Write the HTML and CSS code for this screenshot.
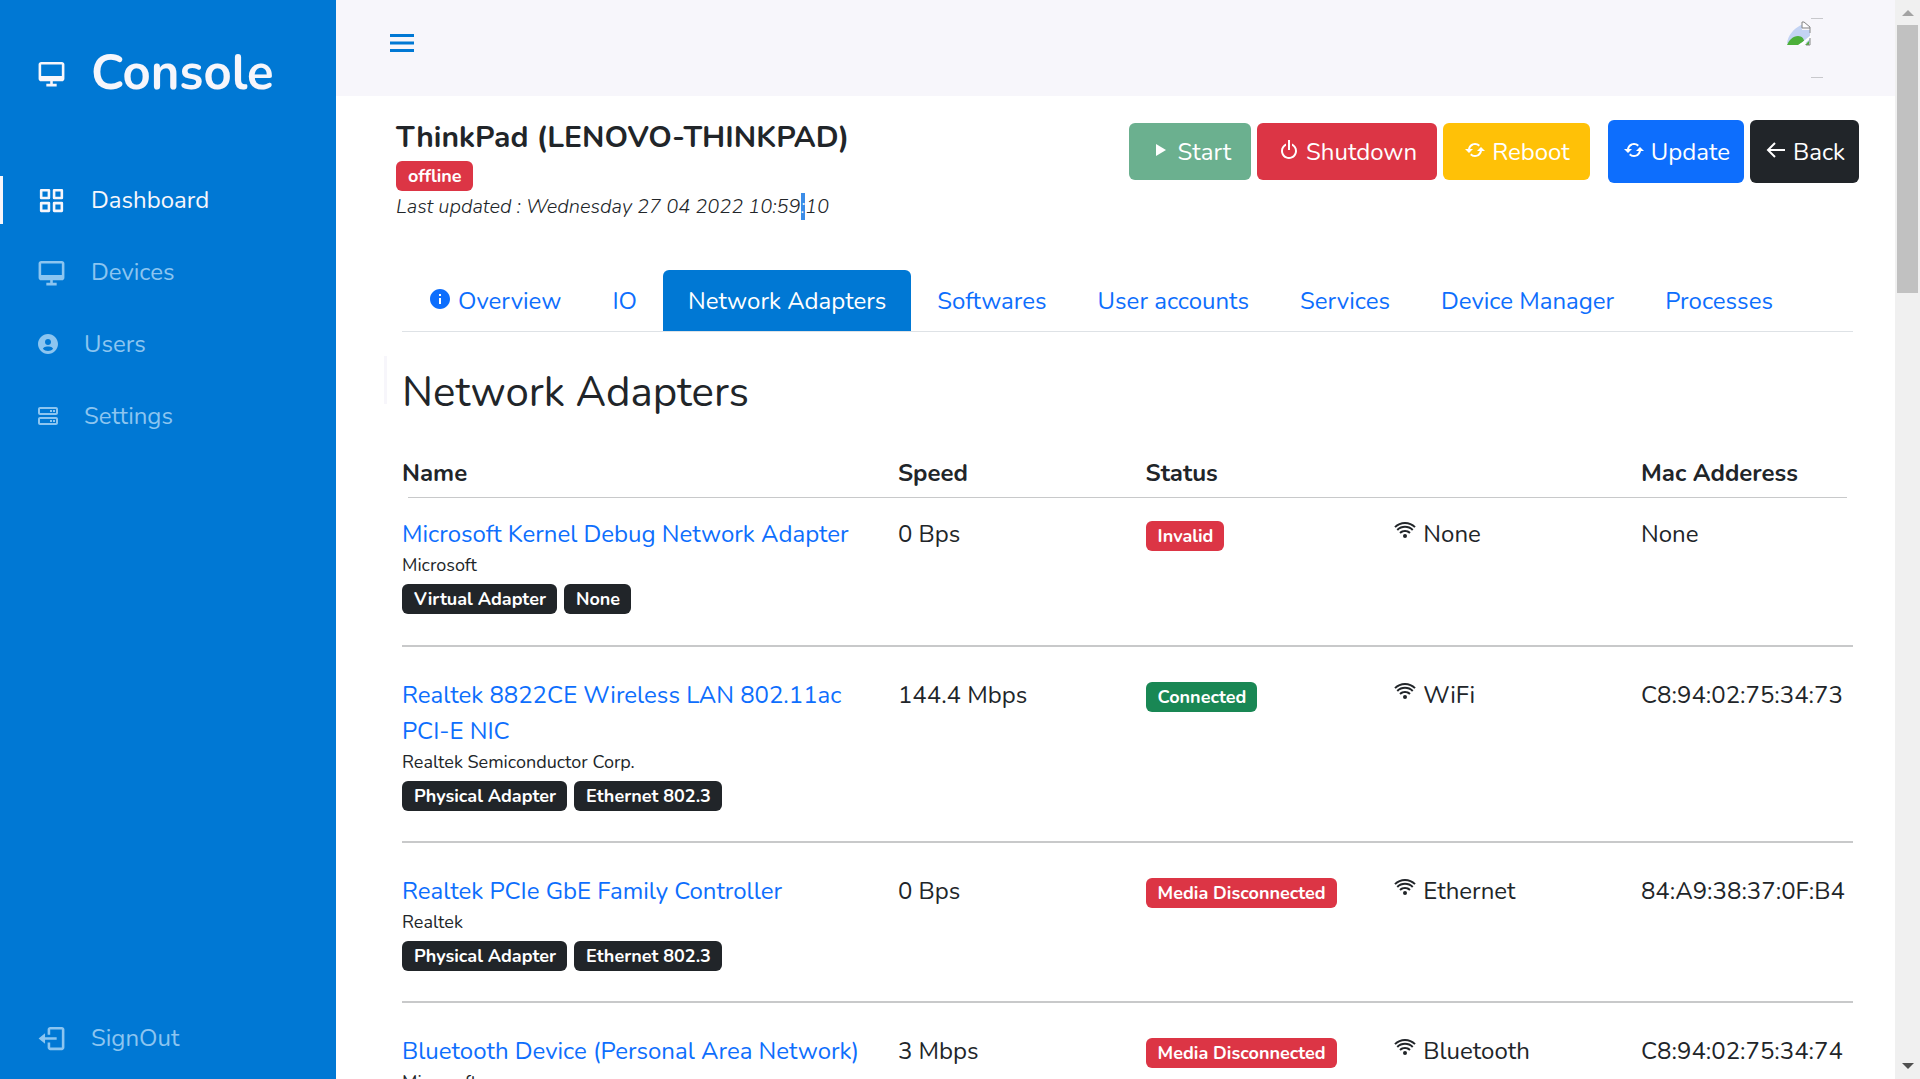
FILE: index.html
```html
<!DOCTYPE html>
<html lang="en">
<head>
<meta charset="utf-8">
<title>Console - Network Adapters</title>
<link rel="stylesheet" href="styles.css">
</head>
<body>
<svg class="sprite" aria-hidden="true">
  <symbol id="desktop" viewBox="0 0 24 24"><path d="M20 3H4c-1.103 0-2 .897-2 2v11c0 1.103.897 2 2 2h7v2H8v2h8v-2h-3v-2h7c1.103 0 2-.897 2-2V5c0-1.103-.897-2-2-2zM4 14V5h16l.002 9H4z"/></symbol>
  <symbol id="grid" viewBox="0 0 24 24"><path d="M10 3H4a1 1 0 0 0-1 1v6a1 1 0 0 0 1 1h6a1 1 0 0 0 1-1V4a1 1 0 0 0-1-1zM9 9H5V5h4v4zm11 4h-6a1 1 0 0 0-1 1v6a1 1 0 0 0 1 1h6a1 1 0 0 0 1-1v-6a1 1 0 0 0-1-1zm-1 6h-4v-4h4v4zM10 13H4a1 1 0 0 0-1 1v6a1 1 0 0 0 1 1h6a1 1 0 0 0 1-1v-6a1 1 0 0 0-1-1zm-1 6H5v-4h4v4zM20 3h-6a1 1 0 0 0-1 1v6a1 1 0 0 0 1 1h6a1 1 0 0 0 1-1V4a1 1 0 0 0-1-1zm-1 6h-4V5h4v4z"/></symbol>
  <symbol id="user" viewBox="0 0 24 24"><path d="M12 2C6.579 2 2 6.579 2 12s4.579 10 10 10 10-4.579 10-10S17.421 2 12 2zm0 5c1.727 0 3 1.272 3 3s-1.273 3-3 3c-1.726 0-3-1.272-3-3s1.274-3 3-3zm-5.106 9.772c.897-1.32 2.393-2.2 4.106-2.2h2c1.714 0 3.209.88 4.106 2.2C15.828 18.14 14.015 19 12 19s-3.828-.86-5.106-2.228z"/></symbol>
  <symbol id="server" viewBox="0 0 24 24"><path d="M20 3H4c-1.103 0-2 .897-2 2v4c0 1.103.897 2 2 2h16c1.103 0 2-.897 2-2V5c0-1.103-.897-2-2-2zM4 9V5h16l.002 4H4zm16 4H4c-1.103 0-2 .897-2 2v4c0 1.103.897 2 2 2h16c1.103 0 2-.897 2-2v-4c0-1.103-.897-2-2-2zM4 19v-4h16l.002 4H4z"/><path d="M17 6h2v2h-2zm-3 0h2v2h-2zm3 10h2v2h-2zm-3 0h2v2h-2z"/></symbol>
  <symbol id="logout" viewBox="0 0 24 24"><path d="m2 12 5 4v-3h9v-2H7V8z"/><path d="M20 3h-9c-1.103 0-2 .897-2 2v4h2V5h9v14h-9v-4H9v4c0 1.103.897 2 2 2h9c1.103 0 2-.897 2-2V5c0-1.103-.897-2-2-2z"/></symbol>
  <symbol id="menu" viewBox="0 0 24 24"><path d="M4 6h16v2H4zm0 5h16v2H4zm0 5h16v2H4z"/></symbol>
  <symbol id="info" viewBox="0 0 24 24"><path d="M12 2C6.486 2 2 6.486 2 12s4.486 10 10 10 10-4.486 10-10S17.514 2 12 2zm1 15h-2v-6h2v6zm0-8h-2V7h2v2z"/></symbol>
  <symbol id="play" viewBox="0 0 24 24"><path d="M7 6v12l10-6z"/></symbol>
  <symbol id="power" viewBox="0 0 24 24"><path d="M12 21c4.411 0 8-3.589 8-8 0-3.35-2.072-6.221-5-7.411v2.223A6 6 0 0 1 18 13c0 3.309-2.691 6-6 6s-6-2.691-6-6a5.999 5.999 0 0 1 3-5.188V5.589C6.072 6.779 4 9.65 4 13c0 4.411 3.589 8 8 8z"/><path d="M11 2h2v10h-2z"/></symbol>
  <symbol id="refresh" viewBox="0 0 24 24"><path d="M10 11H7.101l.001-.009a4.956 4.956 0 0 1 .752-1.787 5.054 5.054 0 0 1 2.2-1.811c.302-.128.617-.226.938-.291a5.078 5.078 0 0 1 2.018 0 4.978 4.978 0 0 1 2.525 1.361l1.416-1.412a7.036 7.036 0 0 0-2.224-1.501 6.921 6.921 0 0 0-1.315-.408 7.079 7.079 0 0 0-2.819 0 6.94 6.94 0 0 0-1.316.409 7.04 7.04 0 0 0-3.08 2.534 6.978 6.978 0 0 0-1.054 2.505c-.028.135-.043.273-.063.41H2l4 4 4-4zm4 2h2.899l-.001.008a4.976 4.976 0 0 1-2.103 3.138 4.943 4.943 0 0 1-1.787.752 5.073 5.073 0 0 1-2.017 0 4.956 4.956 0 0 1-1.787-.752 5.072 5.072 0 0 1-.74-.61L7.05 16.95a7.032 7.032 0 0 0 2.225 1.5c.424.18.867.317 1.315.408a7.07 7.07 0 0 0 2.818 0 7.031 7.031 0 0 0 4.395-2.945 6.974 6.974 0 0 0 1.053-2.503c.027-.135.043-.273.063-.41H22l-4-4-4 4z"/></symbol>
  <symbol id="back" viewBox="0 0 24 24"><path d="M21 11H6.414l5.293-5.293-1.414-1.414L2.586 12l7.707 7.707 1.414-1.414L6.414 13H21z"/></symbol>
  <symbol id="wifi" viewBox="0 0 24 24"><path d="M12 6c3.537 0 6.837 1.353 9.293 3.809l1.414-1.414C19.874 5.561 16.071 4 12 4c-4.071.001-7.874 1.561-10.707 4.395l1.414 1.414C5.163 7.353 8.463 6 12 6zm5.671 8.307c-3.074-3.074-8.268-3.074-11.342 0l1.414 1.414c2.307-2.307 6.207-2.307 8.514 0l1.414-1.414z"/><path d="M20.437 11.293c-4.572-4.574-12.301-4.574-16.873 0l1.414 1.414c3.807-3.807 10.238-3.807 14.045 0l1.414-1.414z"/><circle cx="12" cy="18" r="2"/></symbol>
</svg>

<div class="layout">
  <aside class="sidebar">
    <nav class="nav">
      <a class="brand" href="#"><svg class="icon icon-lg"><use href="#desktop"/></svg><span>Console</span></a>
      <a class="nav-link active" href="#"><svg class="icon icon-lg"><use href="#grid"/></svg><span>Dashboard</span></a>
      <a class="nav-link" href="#"><svg class="icon icon-lg"><use href="#desktop"/></svg><span>Devices</span></a>
      <a class="nav-link" href="#"><svg class="icon"><use href="#user"/></svg><span>Users</span></a>
      <a class="nav-link" href="#"><svg class="icon"><use href="#server"/></svg><span>Settings</span></a>
    </nav>
    <a class="nav-link" href="#"><svg class="icon icon-lg"><use href="#logout"/></svg><span>SignOut</span></a>
  </aside>

  <div class="page">
    <header class="topbar">
      <button class="menu" type="button" aria-label="Toggle menu"><svg class="icon icon-xl"><use href="#menu"/></svg></button>
      <svg class="avatar" viewBox="0 0 60 60" role="img" aria-label="Profile picture">
        <path d="M0 25c1-7 6-14 14-18h1v5h8v13z" fill="#c3d3f3"/>
        <path d="M0 27c2-5 6-9 11-9 4 0 6 3 6 5l-6 4z" fill="#4caf3a"/>
        <path d="m12 27 12-10v3l-8 7z" fill="#fff"/>
        <path d="m18 27 4-4v4z" fill="#4caf3a"/>
        <path d="M15 4v6h8M15 4h2l6 5v6M23 20v7h-4" fill="none" stroke="#858585" stroke-width="1"/>
        <path d="M16 5v4h5z" fill="#fff"/>
        <path d="M24 .5h12M24 59.500h12" stroke="#c8c8cc"/>
      </svg>
    </header>

    <main class="content">
      <div class="device">
        <div class="device-info">
          <h1>ThinkPad (LENOVO-THINKPAD)</h1>
          <span class="badge red">offline</span>
          <em class="updated">Last updated : Wednesday 27 04 2022 10:59<mark>:</mark>10</em>
        </div>
        <div class="actions">
          <button class="btn start" type="button" disabled><svg class="icon"><use href="#play"/></svg>Start</button>
          <button class="btn shutdown" type="button"><svg class="icon"><use href="#power"/></svg>Shutdown</button>
          <button class="btn reboot" type="button"><svg class="icon"><use href="#refresh"/></svg>Reboot</button>
          <button class="btn update" type="button"><svg class="icon"><use href="#refresh"/></svg>Update</button>
          <button class="btn return" type="button"><svg class="icon"><use href="#back"/></svg>Back</button>
        </div>
      </div>

      <nav class="tabs">
        <a href="#"><svg class="icon"><use href="#info"/></svg>Overview</a>
        <a href="#">IO</a>
        <a class="current" href="#">Network Adapters</a>
        <a href="#">Softwares</a>
        <a href="#">User accounts</a>
        <a href="#">Services</a>
        <a href="#">Device Manager</a>
        <a href="#">Processes</a>
      </nav>

      <section class="panel">
        <h2>Network Adapters</h2>
        <table class="adapters">
          <colgroup><col class="wide"><col><col><col><col class="last"></colgroup>
          <thead>
            <tr><th>Name</th><th>Speed</th><th>Status</th><th></th><th>Mac Adderess</th></tr>
          </thead>
          <tbody>
            <tr>
              <td><a href="#">Microsoft Kernel Debug Network Adapter</a><small>Microsoft</small><div class="tags"><span class="badge dark">Virtual Adapter</span><span class="badge dark">None</span></div></td>
              <td>0 Bps</td>
              <td><span class="badge red">Invalid</span></td>
              <td><svg class="icon"><use href="#wifi"/></svg>None</td>
              <td>None</td>
            </tr>
            <tr>
              <td><a href="#">Realtek 8822CE Wireless LAN 802.11ac PCI-E NIC</a><small>Realtek Semiconductor Corp.</small><div class="tags"><span class="badge dark">Physical Adapter</span><span class="badge dark">Ethernet 802.3</span></div></td>
              <td>144.4 Mbps</td>
              <td><span class="badge green">Connected</span></td>
              <td><svg class="icon"><use href="#wifi"/></svg>WiFi</td>
              <td>C8:94:02:75:34:73</td>
            </tr>
            <tr>
              <td><a href="#">Realtek PCIe GbE Family Controller</a><small>Realtek</small><div class="tags"><span class="badge dark">Physical Adapter</span><span class="badge dark">Ethernet 802.3</span></div></td>
              <td>0 Bps</td>
              <td><span class="badge red">Media Disconnected</span></td>
              <td><svg class="icon"><use href="#wifi"/></svg>Ethernet</td>
              <td>84:A9:38:37:0F:B4</td>
            </tr>
            <tr>
              <td><a href="#">Bluetooth Device (Personal Area Network)</a><small>Microsoft</small></td>
              <td>3 Mbps</td>
              <td><span class="badge red">Media Disconnected</span></td>
              <td><svg class="icon"><use href="#wifi"/></svg>Bluetooth</td>
              <td>C8:94:02:75:34:74</td>
            </tr>
          </tbody>
        </table>
      </section>
    </main>
  </div>

  <div class="scrollbar" aria-hidden="true">
    <i class="arrow up"></i><i class="thumb"></i><i class="arrow down"></i>
  </div>
</div>
</body>
</html>
```
FILE: styles.css
```css
* { box-sizing: border-box; }

body {
  margin: 0;
  font: 400 24px/36px Nunito, "Open Sans", sans-serif;
  color: #212529;
  background: #fff;
}

a { color: #0d6efd; text-decoration: none; }
h1, h2 { margin: 0; }
button { font: inherit; border: 0; cursor: pointer; }

.sprite { position: absolute; width: 0; height: 0; }
.icon { width: 24px; height: 24px; fill: currentColor; flex: none; }
.icon-lg { width: 31px; height: 31px; }
.icon-xl { width: 36px; height: 36px; }

.layout { display: flex; height: 100vh; overflow: hidden; }

/* Sidebar */
.sidebar {
  display: flex;
  flex-direction: column;
  justify-content: space-between;
  flex: 0 0 336px;
  padding: 24px 0 17px;
  background: #0078d4;
}
.nav { display: flex; flex-direction: column; gap: 24px; }
.brand, .nav-link {
  display: flex;
  align-items: center;
  gap: 24px;
  padding: 0 36px;
  color: #f7f6fb;
}
.brand { height: 98px; margin-bottom: 30px; font-size: 49px; font-weight: 700; }
.nav-link { height: 48px; color: #8cc5f0; }
.nav-link.active { color: #f7f6fb; border-left: 3px solid #f7f6fb; padding-left: 33px; }

/* Page */
.page { flex: 1; min-width: 0; }
.topbar {
  display: flex;
  align-items: center;
  justify-content: space-between;
  height: 96px;
  padding: 0 48px;
  background: #f7f6fb;
}
.menu { display: flex; padding: 0 0 10px; background: none; color: #0078d4; }
.avatar { width: 60px; height: 60px; }

.content { padding: 18px 36px 0 48px; }

.device { display: flex; justify-content: space-between; padding-left: 12px; }
.device-info { display: flex; flex-direction: column; align-items: flex-start; }
.device-info h1 { margin-bottom: 5px; padding-top: 5px; font-size: 30px; line-height: 37px; font-weight: 700; }
.updated { font-size: 20px; font-weight: 300; line-height: 32px; }
.updated mark { color: #fff; background: #3b8de8; }

.badge {
  display: inline-block;
  padding: 0 11px 0 12px;
  border-radius: 6px;
  font-size: 18px;
  line-height: 30px;
  font-weight: 700;
  color: #fff;
}
.red { background: #dc3545; }
.green { background: #198754; }
.dark { background: #212529; }

.actions { display: flex; align-items: center; align-self: flex-start; gap: 6px; padding-top: 6px; }
.btn { display: flex; align-items: center; gap: 5px; height: 57px; padding: 0 20px; border-radius: 6px; color: #fff; }
.btn .icon { margin-bottom: 4px; }
.start { background: #6bb08f; cursor: default; }
.shutdown { background: #dc3545; }
.reboot { background: #ffc107; margin-right: 12px; }
.update { background: #0d6efd; }
.return { background: #212529; }
.update, .return { height: 63px; padding: 0 14px; }

/* Tabs */
.tabs {
  display: flex;
  gap: 1px;
  margin: 47px 6px 0 18px;
  padding-left: 1px;
  border-bottom: 1px solid #dee2e6;
}
.tabs a { display: flex; gap: 6px; height: 61px; padding: 13px 25px 12px; border-radius: 6px 6px 0 0; white-space: nowrap; }
.tabs .icon { margin-top: 4px; }
.tabs .current { color: #fff; background: #0078d4; }

/* Panel */
.panel { margin: 24px 6px 0 0; padding-left: 18px; background: linear-gradient(#f7f6fb, #f7f6fb) 0 0 / 3px 48px no-repeat; }
.panel h2 { padding: 12px 0 26px; font-size: 42px; line-height: 50px; font-weight: 400; }

.adapters { width: 100%; border-collapse: collapse; table-layout: fixed; }
.adapters col { width: 17.07%; }
.adapters .wide { width: 34.18%; }
.adapters .last { width: auto; }
.adapters th { padding: 11px 0 7px; text-align: left; font-weight: 700; }
.adapters thead tr { background: linear-gradient(#c8c9ca, #c8c9ca) center bottom / calc(100% - 12px) 1px no-repeat; }
.adapters td { padding: 30px 0; vertical-align: top; }
.adapters td:first-child { padding-right: 36px; }
.adapters td:last-child { white-space: nowrap; }
.adapters tbody tr + tr { border-top: 2px solid #c8c9ca; }
.adapters tbody tr:first-child td { padding: 18px 0 31px; }
.adapters td > a, .adapters small { display: block; }
.adapters small { font-size: 18px; line-height: 27px; }
.adapters td .icon { margin-right: 6px; }
.adapters td > .badge { margin-top: 5px; }
.tags { display: flex; gap: 7px; padding-top: 5px; }

/* Scrollbar */
.scrollbar {
  display: flex;
  flex-direction: column;
  align-items: center;
  flex: 0 0 25px;
  padding: 10px 0;
  background: #f0f0f0;
}
.arrow { border: 6px solid transparent; }
.up { border-top: 0; border-bottom-color: #a3a3a3; }
.down { border-bottom: 0; border-top-color: #505050; margin-top: auto; }
.thumb { width: 21px; height: calc(25% + 3px); margin-top: 9px; background: #c1c1c1; }
```
